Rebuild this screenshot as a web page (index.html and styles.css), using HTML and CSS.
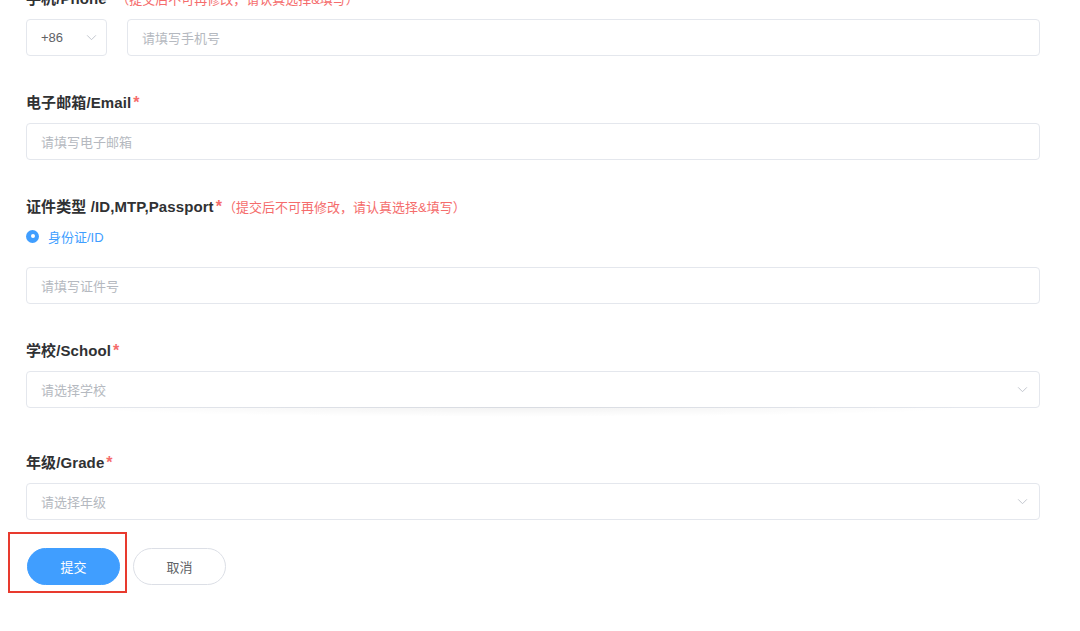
FILE: index.html
```html
<!DOCTYPE html>
<html lang="zh-CN">
<head>
<meta charset="utf-8">
<title>Form</title>
<link rel="stylesheet" href="styles.css">
</head>
<body>
<form class="form">
  <div class="item">
    <div class="label">手机/Phone<span class="req">*</span><span class="note">（提交后不可再修改，请认真选择&amp;填写）</span></div>
    <div class="phone-row">
      <div class="box country">
        <span class="value">+86</span>
        <svg class="chev" viewBox="0 0 12 8" width="11" height="7"><path d="M1 1.5 L6 6.5 L11 1.5" fill="none" stroke="#c0c4cc" stroke-width="1.1"/></svg>
      </div>
      <div class="box grow"><span class="ph">请填写手机号</span></div>
    </div>
  </div>

  <div class="item">
    <div class="label">电子邮箱/Email<span class="req">*</span></div>
    <div class="box"><span class="ph">请填写电子邮箱</span></div>
  </div>

  <div class="item">
    <div class="label">证件类型 /ID,MTP,Passport<span class="req">*</span><span class="note">（提交后不可再修改，请认真选择&amp;填写）</span></div>
    <div class="radio-row">
      <span class="radio"></span>
      <span class="radio-text">身份证/ID</span>
    </div>
    <div class="box"><span class="ph">请填写证件号</span></div>
  </div>

  <div class="item item-school">
    <div class="label">学校/School<span class="req">*</span></div>
    <div class="box select shadowed">
      <span class="ph">请选择学校</span>
      <svg class="chev" viewBox="0 0 12 8" width="11" height="7"><path d="M1 1.5 L6 6.5 L11 1.5" fill="none" stroke="#c0c4cc" stroke-width="1.1"/></svg>
    </div>
  </div>

  <div class="item item-last">
    <div class="label">年级/Grade<span class="req">*</span></div>
    <div class="box select">
      <span class="ph">请选择年级</span>
      <svg class="chev" viewBox="0 0 12 8" width="11" height="7"><path d="M1 1.5 L6 6.5 L11 1.5" fill="none" stroke="#c0c4cc" stroke-width="1.1"/></svg>
    </div>
  </div>

  <div class="actions">
    <div class="submit-wrap">
      <button type="button" class="btn primary">提交</button>
      <span class="highlight"></span>
    </div>
    <button type="button" class="btn plain">取消</button>
  </div>
</form>
</body>
</html>
```

FILE: styles.css
```css
* { box-sizing: border-box; }
html, body { margin: 0; padding: 0; background: #fff; }
body {
  font-family: "Liberation Sans", "Noto Sans CJK SC", sans-serif;
  color: #303133;
  width: 1080px;
  height: 631px;
  overflow: hidden;
}
.form {
  margin: -11px 0 0 26px;
  width: 1014px;
}
.item { margin-bottom: 37px; }
.item-school { margin-bottom: 45px; }
.item-last { margin-bottom: 28px; }
.label {
  height: 20px;
  line-height: 20px;
  font-size: 15px;
  font-weight: 700;
  color: #303133;
  margin-bottom: 10px;
  white-space: nowrap;
  letter-spacing: 0.1px;
}
.req {
  color: #f56c6c;
  font-weight: 700;
  font-size: 16px;
  margin-left: 2px;
}
.note {
  color: #f56c6c;
  font-weight: 400;
  font-size: 13px;
  margin-left: 1px;
  letter-spacing: 0;
}
.box {
  display: flex;
  align-items: center;
  height: 37px;
  border: 1px solid #e4e7ed;
  border-radius: 4px;
  padding: 0 14px;
  background: #fff;
  font-size: 13px;
}
.ph { color: #b5b9c0; }
.phone-row { display: flex; gap: 20px; }
.country { width: 81px; flex: none; justify-content: space-between; padding-right: 9px; }
.country .value { color: #606266; }
.grow { flex: 1; }
.select { justify-content: space-between; padding-right: 11px; }
.chev { display: block; }
.shadowed { position: relative; }
.shadowed::after {
  content: "";
  position: absolute;
  left: 30px;
  right: 60px;
  top: 100%;
  height: 10px;
  background: radial-gradient(ellipse at 50% 0%, rgba(0,0,0,0.05), rgba(0,0,0,0) 70%);
}
.radio-row {
  display: flex;
  align-items: center;
  height: 20px;
  margin-top: -1px;
  margin-bottom: 21px;
}
.radio {
  width: 13px;
  height: 13px;
  border-radius: 50%;
  background: #409eff;
  position: relative;
}
.radio::after {
  content: "";
  position: absolute;
  width: 4px;
  height: 4px;
  background: #fff;
  border-radius: 50%;
  left: 4.5px;
  top: 4.5px;
}
.radio-text {
  color: #409eff;
  font-size: 13px;
  margin-left: 9px;
}
.actions { display: flex; gap: 13px; padding-left: 1px; }
.submit-wrap { position: relative; }
.btn {
  width: 93px;
  height: 37px;
  border-radius: 19px;
  font-family: inherit;
  font-size: 13px;
  cursor: pointer;
  padding: 0;
}
.primary { background: #409eff; border: 1px solid #409eff; color: #fff; }
.plain { background: #fff; border: 1px solid #dcdfe6; color: #606266; }
.highlight {
  position: absolute;
  left: -19px;
  top: -16px;
  width: 119px;
  height: 61px;
  border: 2px solid #e83a2e;
  pointer-events: none;
}
```
